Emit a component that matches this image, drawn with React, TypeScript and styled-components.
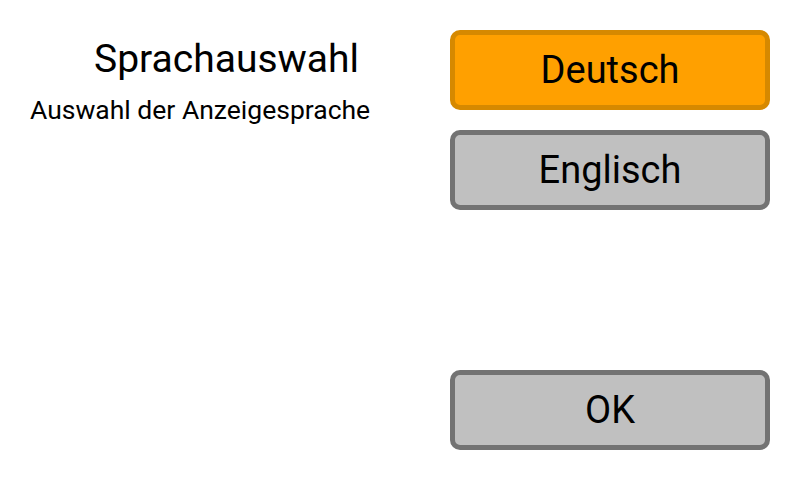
import styled, { createGlobalStyle } from 'styled-components';

const GlobalStyle = createGlobalStyle`
  html, body {
    margin: 0;
    padding: 0;
    background: #ffffff;
  }
  body {
    font-family: Roboto, "Liberation Sans", sans-serif;
    color: #000000;
  }
`;

type Variant = 'active' | 'default';

const App = () => {
  return (
    <>
      <GlobalStyle />
      <Screen>
        <InfoColumn>
          <Title>Sprachauswahl</Title>
          <Subtitle>Auswahl der Anzeigesprache</Subtitle>
        </InfoColumn>
        <ButtonColumn>
          <LangButton $variant="active">Deutsch</LangButton>
          <LangButton $variant="default">Englisch</LangButton>
          <Spacer />
          <LangButton $variant="default">OK</LangButton>
        </ButtonColumn>
      </Screen>
    </>
  );
};

const Screen = styled.div`
  width: 800px;
  height: 480px;
  box-sizing: border-box;
  padding: 30px;
  display: flex;
  gap: 80px;
`;

const InfoColumn = styled.div`
  width: 340px;
  display: flex;
  flex-direction: column;
`;

const Title = styled.h1`
  margin: 7px 11px 0 0;
  font-size: 39px;
  line-height: 44px;
  font-weight: 400;
  text-align: right;
  white-space: nowrap;
`;

const Subtitle = styled.p`
  margin: 13px 0 0 0;
  font-size: 26.5px;
  line-height: 32px;
  font-weight: 400;
  white-space: nowrap;
`;

const ButtonColumn = styled.div`
  width: 320px;
  display: flex;
  flex-direction: column;
  gap: 20px;
`;

const Spacer = styled.div`
  flex: 1;
`;

const LangButton = styled.button<{ $variant: Variant }>`
  height: 80px;
  width: 100%;
  box-sizing: border-box;
  border: 5px solid ${(p) => (p.$variant === 'active' ? '#d68900' : '#737373')};
  border-radius: 10px;
  background: ${(p) => (p.$variant === 'active' ? '#ffa000' : '#c0c0c0')};
  color: #000000;
  font-family: Roboto, "Liberation Sans", sans-serif;
  font-size: 38px;
  font-weight: 400;
  display: flex;
  align-items: center;
  justify-content: center;
  padding: 0;
  cursor: pointer;
`;

export default App;
